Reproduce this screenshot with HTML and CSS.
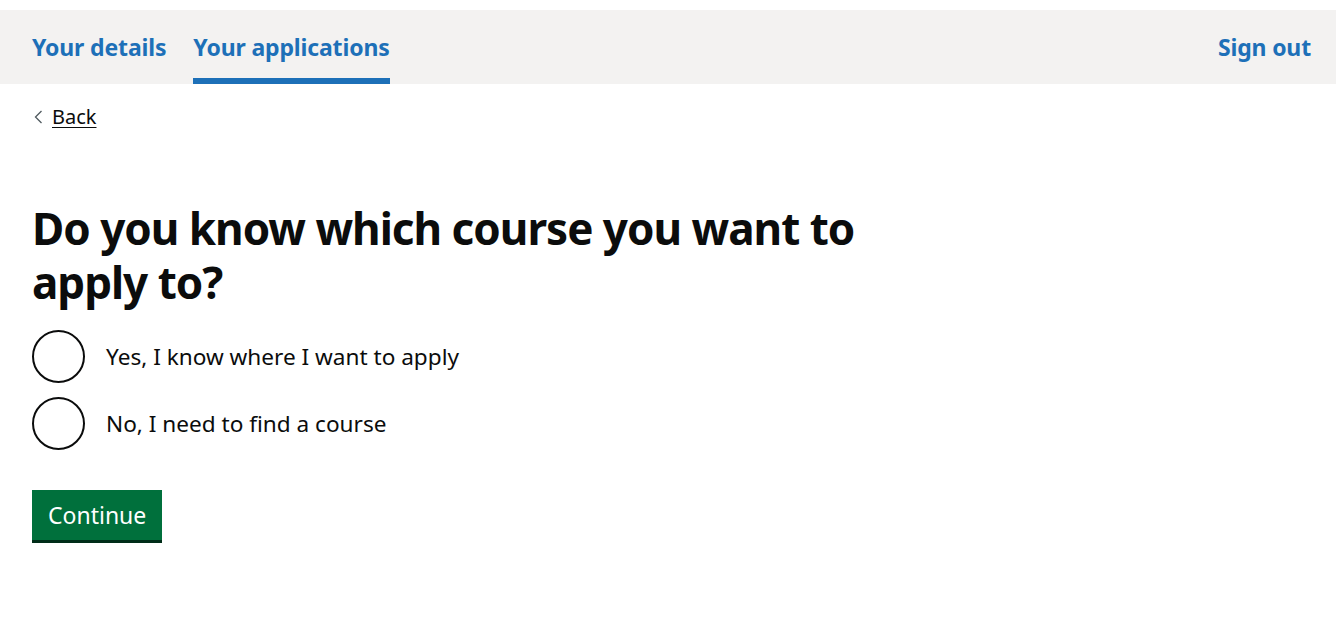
FILE: index.html
```html
<!DOCTYPE html>
<html lang="en">
<head>
<meta charset="utf-8">
<title>Do you know which course you want to apply to?</title>
<link rel="stylesheet" href="styles.css">
</head>
<body>
<div class="top-gap"></div>
<nav class="service-nav">
  <ul class="nav-list">
    <li class="nav-item"><a class="nav-link" href="#">Your details</a></li>
    <li class="nav-item nav-item--active"><a class="nav-link" href="#">Your applications</a></li>
  </ul>
  <a class="nav-link nav-signout" href="#">Sign out</a>
</nav>
<main class="main">
  <a class="back-link" href="#">
    <svg class="back-chevron" width="9" height="14" viewBox="0 0 9 14" aria-hidden="true"><path d="M7.5 1 L1.5 7 L7.5 13" fill="none" stroke="#505a5f" stroke-width="1.3"/></svg>
    <span class="back-text">Back</span>
  </a>
  <form class="form">
    <h1 class="heading">Do you know which course you want to apply to?</h1>
    <div class="radios">
      <label class="radio">
        <span class="radio-circle"></span>
        <span class="radio-label">Yes, I know where I want to apply</span>
      </label>
      <label class="radio">
        <span class="radio-circle"></span>
        <span class="radio-label">No, I need to find a course</span>
      </label>
    </div>
    <button class="button" type="button">Continue</button>
  </form>
</main>
</body>
</html>
```

FILE: styles.css
```css
* { box-sizing: border-box; }
html, body {
  margin: 0;
  padding: 0;
  background: #ffffff;
  font-family: "Noto Sans", "Liberation Sans", Arial, sans-serif;
  color: #0b0c0c;
}
.top-gap { height: 10px; }
.service-nav {
  background: #f3f2f1;
  height: 74px;
  display: flex;
  justify-content: space-between;
  align-items: stretch;
  padding: 0 25px 0 32px;
}
.nav-list {
  list-style: none;
  margin: 0;
  padding: 0;
  display: flex;
  gap: 27px;
}
.nav-item {
  display: flex;
  align-items: center;
  padding-bottom: 2px;
  border-bottom: 6px solid transparent;
  padding-top: 7px;
}
.nav-item--active { border-bottom-color: #1d70b8; }
.nav-link {
  color: #1d70b8;
  font-weight: 700;
  font-size: 23px;
  text-decoration: none;
  letter-spacing: -0.15px;
}
.nav-signout {
  display: flex;
  align-items: center;
  padding-bottom: 1px;
}
.main {
  padding: 0 32px;
}
.back-link {
  display: inline-flex;
  align-items: center;
  gap: 9px;
  margin-top: 21px;
  color: #0b0c0c;
  text-decoration: none;
  margin-left: 2px;
}
.back-text {
  font-size: 20px;
  text-decoration: underline;
  text-underline-offset: 3px;
  text-decoration-thickness: 1px;
  line-height: 24px;
}
.form { margin-top: 72px; }
.heading {
  margin: 0 0 21px;
  font-size: 44px;
  font-weight: 700;
  line-height: 54px;
  letter-spacing: -1px;
  max-width: 880px;
}
.radios {
  display: flex;
  flex-direction: column;
  gap: 14px;
}
.radio {
  display: flex;
  align-items: center;
  gap: 21px;
}
.radio-circle {
  width: 53px;
  height: 53px;
  border: 2px solid #0b0c0c;
  border-radius: 50%;
  flex: none;
}
.radio-label {
  font-size: 22.6px;
  line-height: 30px;
}
.button {
  display: block;
  margin: 40px 0 3px;
  background: #00703c;
  color: #ffffff;
  border: 0;
  border-bottom: 3px solid #002d18;
  border-radius: 0;
  font-family: inherit;
  font-size: 23px;
  line-height: 30px;
  padding: 10px 16px 10px;
  height: 53px;
  cursor: pointer;
}
```
